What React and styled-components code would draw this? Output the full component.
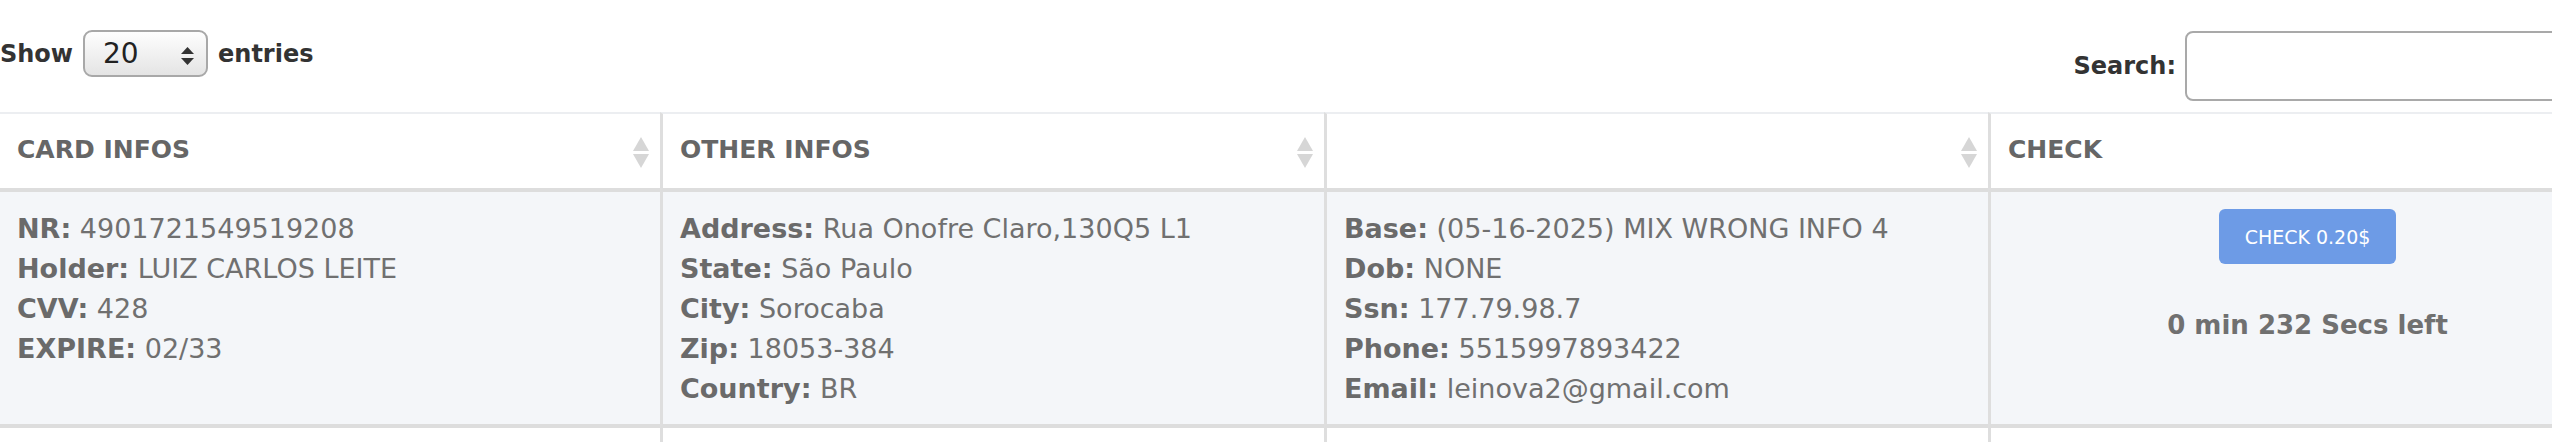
import React from "react";
import styled, { createGlobalStyle } from "styled-components";

const GlobalStyle = createGlobalStyle`
  body {
    margin: 0;
    background: #fff;
    overflow: hidden;
    font-family: "DejaVu Sans", Verdana, sans-serif;
  }
`;

const rows = [
  {
    card: [
      ["NR:", "4901721549519208"],
      ["Holder:", "LUIZ CARLOS LEITE"],
      ["CVV:", "428"],
      ["EXPIRE:", "02/33"],
    ],
    other: [
      ["Address:", "Rua Onofre Claro,130Q5 L1"],
      ["State:", "São Paulo"],
      ["City:", "Sorocaba"],
      ["Zip:", "18053-384"],
      ["Country:", "BR"],
    ],
    extra: [
      ["Base:", "(05-16-2025) MIX WRONG INFO 4"],
      ["Dob:", "NONE"],
      ["Ssn:", "177.79.98.7"],
      ["Phone:", "5515997893422"],
      ["Email:", "leinova2@gmail.com"],
    ],
    price: "0.20$",
    left: "0 min 232 Secs left",
  },
];

const SortIcon = () => (
  <SortMark viewBox="0 0 16 31" width="16" height="31">
    <path d="M8 0 L16 14 L0 14 Z" fill="#d6d6d6" />
    <path d="M0 17 L16 17 L8 31 Z" fill="#d6d6d6" />
  </SortMark>
);

const InfoList = ({ items }) => (
  <>
    {items.map(([label, value]) => (
      <Line key={label}>
        <Label>{label}</Label> {value}
      </Line>
    ))}
  </>
);

export default function App() {
  return (
    <Page>
      <GlobalStyle />
      <Toolbar>
        <Length>
          Show
          <SelectWrap>
            <Select defaultValue="20">
              <option value="10">10</option>
              <option value="20">20</option>
              <option value="50">50</option>
            </Select>
            <Arrows viewBox="0 0 13 18" width="13" height="18">
              <path d="M6.5 0 L13 7 L0 7 Z" fill="#333" />
              <path d="M0 11 L13 11 L6.5 18 Z" fill="#333" />
            </Arrows>
          </SelectWrap>
          entries
        </Length>
        <Filter>
          Search:
          <SearchInput type="search" />
        </Filter>
      </Toolbar>

      <Table>
        <colgroup>
          <col style={{ width: 660 }} />
          <col style={{ width: 664 }} />
          <col style={{ width: 664 }} />
          <col style={{ width: 636 }} />
        </colgroup>
        <thead>
          <tr>
            <Th>
              CARD INFOS
              <SortIcon />
            </Th>
            <Th>
              OTHER INFOS
              <SortIcon />
            </Th>
            <Th>
              <SortIcon />
            </Th>
            <Th>
              CHECK
              <SortIcon />
            </Th>
          </tr>
        </thead>
        <tbody>
          {rows.map((row, i) => (
            <Tr key={i} $striped={i % 2 === 0}>
              <Td>
                <InfoList items={row.card} />
              </Td>
              <Td>
                <InfoList items={row.other} />
              </Td>
              <Td>
                <InfoList items={row.extra} />
              </Td>
              <Td $center>
                <CheckButton>CHECK {row.price}</CheckButton>
                <TimeLeft>{row.left}</TimeLeft>
              </Td>
            </Tr>
          ))}
          <Tr>
            <Td />
            <Td />
            <Td />
            <Td />
          </Tr>
        </tbody>
      </Table>
    </Page>
  );
}

const Page = styled.div`
  width: 2624px;
`;

const Toolbar = styled.div`
  display: flex;
  justify-content: space-between;
  align-items: flex-start;
  padding-top: 30px;
  margin-bottom: 11px;
  font-size: 24px;
  font-weight: bold;
  color: #333;
`;

const Length = styled.label`
  display: flex;
  align-items: center;
  gap: 10px;
`;

const SelectWrap = styled.span`
  position: relative;
  display: inline-block;
`;

const Select = styled.select`
  appearance: none;
  width: 125px;
  height: 47px;
  padding: 0 0 0 18px;
  border: 2px solid #a8a8a8;
  border-radius: 9px;
  background: linear-gradient(#fefefe, #e4e4e4);
  font-family: "DejaVu Sans", Verdana, sans-serif;
  font-size: 28px;
  color: #222;
  outline: none;
`;

const Arrows = styled.svg`
  position: absolute;
  top: 17px;
  right: 14px;
  pointer-events: none;
`;

const Filter = styled.label`
  display: flex;
  align-items: center;
  gap: 9px;
  padding-top: 1px;
`;

const SearchInput = styled.input`
  width: 439px;
  height: 70px;
  box-sizing: border-box;
  border: 2px solid #a9a9a9;
  border-radius: 8px;
  background: #fff;
  outline: none;
`;

const Table = styled.table`
  width: 2624px;
  table-layout: fixed;
  border-collapse: separate;
  border-spacing: 0;
`;

const Th = styled.th`
  position: relative;
  padding: 16px 17px 18px;
  line-height: 40px;
  height: 40px;
  text-align: left;
  font-size: 25px;
  font-weight: bold;
  color: #666;
  border-top: 2px solid #eceef1;
  border-bottom: 4px solid #dddddd;
  & + & {
    border-left: 3px solid #dedede;
  }
`;

const SortMark = styled.svg`
  position: absolute;
  right: 11px;
  top: 23px;
`;

const Tr = styled.tr`
  background: ${({ $striped }) => ($striped ? "#f4f6f9" : "#fff")};
`;

const Td = styled.td`
  vertical-align: top;
  padding: 17px 17px 15px;
  height: 40px;
  font-size: 27px;
  line-height: 40px;
  color: #707070;
  text-align: ${({ $center }) => ($center ? "center" : "left")};
  border-bottom: 4px solid #dddddd;
  & + & {
    border-left: 3px solid #dedede;
  }
`;

const Line = styled.div`
  white-space: nowrap;
`;

const Label = styled.b`
  font-weight: bold;
  color: #6a6a6a;
`;

const CheckButton = styled.button`
  display: inline-block;
  height: 55px;
  padding: 0 26px;
  border: none;
  border-radius: 6px;
  background: #6d9be6;
  color: #fff;
  font-family: "DejaVu Sans", Verdana, sans-serif;
  font-size: 19px;
  cursor: pointer;
`;

const TimeLeft = styled.div`
  margin-top: 41px;
  font-size: 26px;
  font-weight: bold;
  color: #707070;
`;
